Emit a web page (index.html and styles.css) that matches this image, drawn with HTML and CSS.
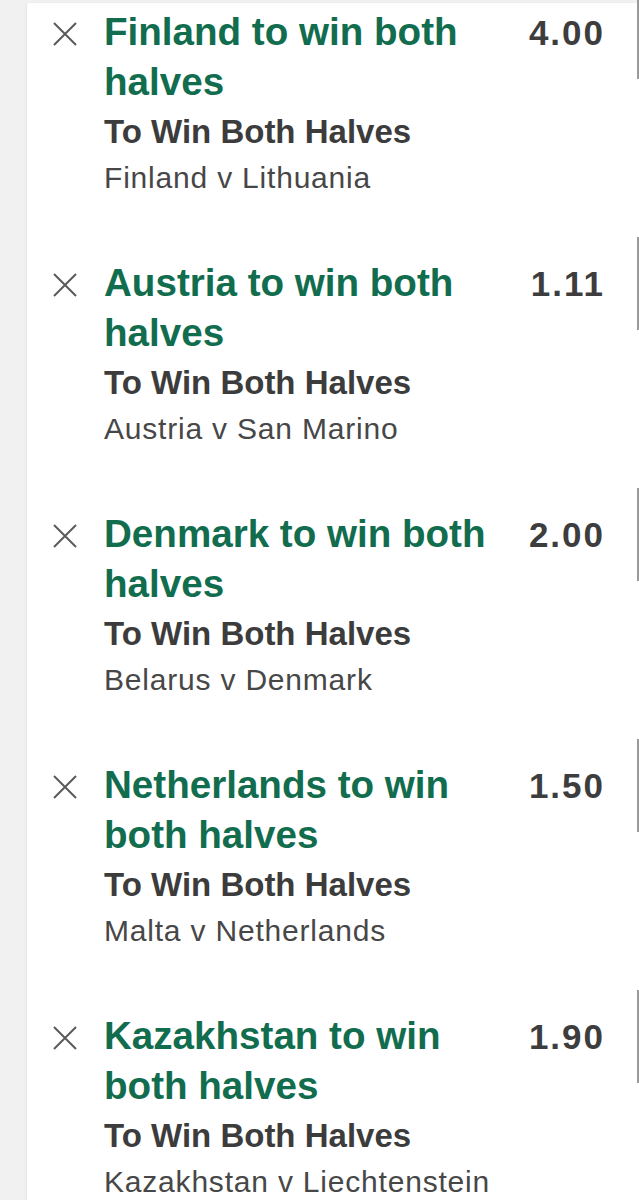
FILE: index.html
```html
<!DOCTYPE html>
<html lang="en">
<head>
<meta charset="utf-8">
<title>Bet slip</title>
<link rel="stylesheet" href="styles.css">
</head>
<body>
<div class="card">
  <div class="bet">
    <svg class="remove" viewBox="0 0 24 24" aria-hidden="true"><path d="M1 1 L23 23 M23 1 L1 23"/></svg>
    <div class="info">
      <div class="selection">Finland to win both halves</div>
      <div class="market">To Win Both Halves</div>
      <div class="event">Finland v Lithuania</div>
    </div>
    <div class="odds">4.00</div>
  </div>
  <div class="bet">
    <svg class="remove" viewBox="0 0 24 24" aria-hidden="true"><path d="M1 1 L23 23 M23 1 L1 23"/></svg>
    <div class="info">
      <div class="selection">Austria to win both halves</div>
      <div class="market">To Win Both Halves</div>
      <div class="event">Austria v San Marino</div>
    </div>
    <div class="odds">1.11</div>
  </div>
  <div class="bet">
    <svg class="remove" viewBox="0 0 24 24" aria-hidden="true"><path d="M1 1 L23 23 M23 1 L1 23"/></svg>
    <div class="info">
      <div class="selection">Denmark to win both halves</div>
      <div class="market">To Win Both Halves</div>
      <div class="event">Belarus v Denmark</div>
    </div>
    <div class="odds">2.00</div>
  </div>
  <div class="bet">
    <svg class="remove" viewBox="0 0 24 24" aria-hidden="true"><path d="M1 1 L23 23 M23 1 L1 23"/></svg>
    <div class="info">
      <div class="selection">Netherlands to win both halves</div>
      <div class="market">To Win Both Halves</div>
      <div class="event">Malta v Netherlands</div>
    </div>
    <div class="odds">1.50</div>
  </div>
  <div class="bet">
    <svg class="remove" viewBox="0 0 24 24" aria-hidden="true"><path d="M1 1 L23 23 M23 1 L1 23"/></svg>
    <div class="info">
      <div class="selection">Kazakhstan to win both halves</div>
      <div class="market">To Win Both Halves</div>
      <div class="event">Kazakhstan v Liechtenstein</div>
    </div>
    <div class="odds">1.90</div>
  </div>
</div>
</body>
</html>
```

FILE: styles.css
```css
html, body {
  margin: 0;
  padding: 0;
  background: #f1f1f1;
  height: 1200px;
  overflow: hidden;
}

body {
  padding: 3px 0 0 27px;
  box-sizing: border-box;
  font-family: "Liberation Sans", Arial, sans-serif;
}

.card {
  background: #ffffff;
  box-shadow: -1px 0 2px rgba(0, 0, 0, 0.06);
  min-height: 1300px;
}

.bet {
  position: relative;
  display: flex;
  align-items: flex-start;
  height: 251px;
  box-sizing: border-box;
  padding: 4px 36px 0 26px;
}

.bet::after {
  content: "";
  position: absolute;
  right: 0;
  top: -17px;
  width: 2px;
  height: 93px;
  background: #9a9a9a;
}

.remove {
  flex: none;
  width: 24px;
  height: 24px;
  margin-top: 15px;
  margin-right: 27px;
  fill: none;
  stroke: #5a5a5a;
  stroke-width: 2;
}

.info {
  flex: 1;
  min-width: 0;
}

.selection {
  color: #116d4e;
  font-weight: 700;
  font-size: 38.6px;
  line-height: 50px;
}

.market {
  color: #3c3c3c;
  font-weight: 700;
  font-size: 33px;
  line-height: 48px;
  margin-top: 1px;
}

.event {
  color: #474747;
  font-size: 30px;
  line-height: 44px;
  letter-spacing: 0.8px;
}

.odds {
  flex: none;
  width: 100px;
  text-align: right;
  color: #3d3d3d;
  font-weight: 700;
  font-size: 35px;
  line-height: 50px;
  padding-top: 1px;
  letter-spacing: 2px;
  margin-right: -2px;
}
```
